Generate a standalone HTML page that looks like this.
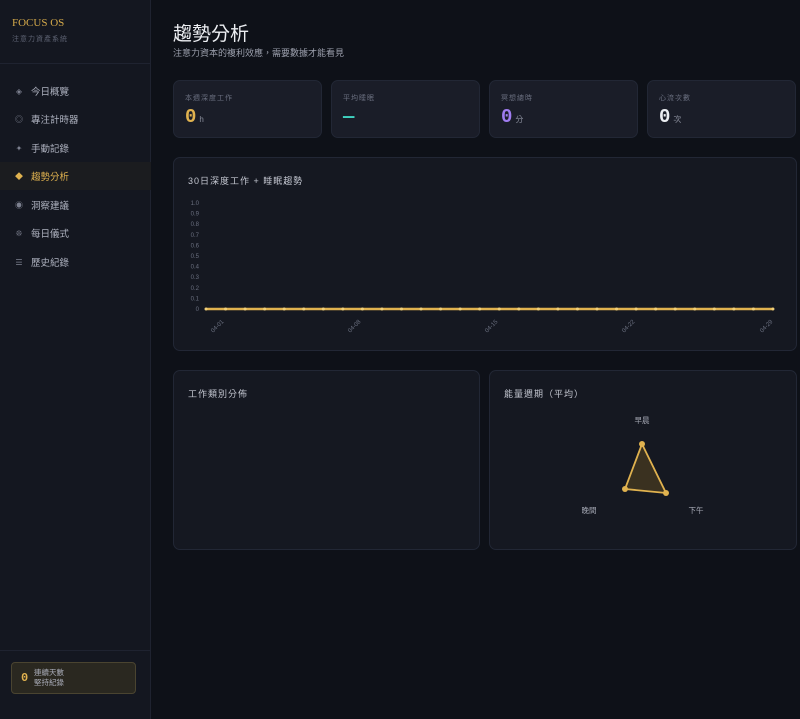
<!DOCTYPE html>
<html><head><meta charset="utf-8"><style>
*{margin:0;padding:0;box-sizing:border-box}
body{width:800px;height:719px;background:#0e1118;font-family:"Liberation Sans","Noto Sans CJK TC",sans-serif;color:#c9ccd6;position:relative;overflow:hidden}
.sb{position:absolute;left:0;top:0;width:151px;height:719px;background:#141720;border-right:1px solid #1f2330}
.logo{position:absolute;left:12px;top:17px;font-family:"Liberation Serif",serif;color:#d4a94a;font-size:11px}
.sub{position:absolute;left:12px;top:34px;font-size:7px;color:#5d6272;letter-spacing:1px}
.hr{position:absolute;left:0;width:151px;height:1px;background:#1f2330}
.nav{position:absolute;left:0;width:151px;height:28px;font-size:9.5px;color:#aeb2bf;display:flex;align-items:center}
.nav i{font-style:normal;width:20px;margin-left:9px;margin-right:2px;text-align:center;font-size:8px;color:#7d8190}
.nav.a{background:#1b1c1f;color:#e0b24f}.nav.a i{color:#e0b24f}
.card{position:absolute;background:#1a1d28;border:1px solid #222735;border-radius:7px}
.lbl{position:absolute;left:11px;top:12px;font-size:7px;color:#6b7080;letter-spacing:1px}
.val{position:absolute;left:11px;top:25px;font-family:"Liberation Mono",monospace;font-weight:bold;font-size:19px}
.val small{font-family:"Liberation Sans","Noto Sans CJK TC",sans-serif;font-weight:normal;font-size:8px;color:#8a8e9c;margin-left:3px}
.ct{position:absolute;left:14px;top:16px;font-size:9px;color:#c3c6d0;letter-spacing:1px}
</style></head><body>
<div class="sb">
<div class="logo">FOCUS OS</div>
<div class="sub">注意力資產系統</div>
<div class="hr" style="top:63px"></div>
<div class="nav" style="top:77px"><i>◈</i>今日概覽</div>
<div class="nav" style="top:105px"><i>◎</i>專注計時器</div>
<div class="nav" style="top:134px"><i>✦</i>手動記錄</div>
<div class="nav a" style="top:162px"><i>◆</i>趨勢分析</div>
<div class="nav" style="top:191px"><i>◉</i>洞察建議</div>
<div class="nav" style="top:219px"><i>❊</i>每日儀式</div>
<div class="nav" style="top:248px"><i>☰</i>歷史紀錄</div>
<div class="hr" style="top:650px"></div>
<div style="position:absolute;left:11px;top:662px;width:125px;height:32px;background:#2a2820;border:1px solid #4a4430;border-radius:4px">
<div style="position:absolute;left:9px;top:8px;font-family:'Liberation Mono',monospace;font-weight:bold;color:#e0b24f;font-size:12px">0</div>
<div style="position:absolute;left:22px;top:5px;font-size:7.5px;color:#a9acb8;line-height:10px">連續天數<br>堅持紀錄</div>
</div>
</div>
<div style="position:absolute;left:173px;top:19px;font-size:19px;color:#eceef2">趨勢分析</div>
<div style="position:absolute;left:173px;top:46px;font-size:9px;color:#9a9eab">注意力資本的複利效應，需要數據才能看見</div>

<div class="card" style="left:173px;top:80px;width:149px;height:58px"><div class="lbl">本週深度工作</div><div class="val" style="color:#e0b24f">0<small>h</small></div></div>
<div class="card" style="left:331px;top:80px;width:149px;height:58px"><div class="lbl">平均睡眠</div><div class="val" style="color:#3fd1bf">—</div></div>
<div class="card" style="left:489px;top:80px;width:149px;height:58px"><div class="lbl">冥想總時</div><div class="val" style="color:#a07cf0">0<small>分</small></div></div>
<div class="card" style="left:647px;top:80px;width:149px;height:58px"><div class="lbl">心流次數</div><div class="val" style="color:#eceef2">0<small>次</small></div></div>

<div class="card" style="left:173px;top:157px;width:624px;height:194px;background:#151821"><div class="ct">30日深度工作 + 睡眠趨勢</div></div>
<svg style="position:absolute;left:0;top:0" width="800" height="719">
<g font-size="6" fill="#6b7080" text-anchor="end" font-family="Liberation Sans">
<text x="199" y="205">1.0</text><text x="199" y="215.6">0.9</text><text x="199" y="226.2">0.8</text><text x="199" y="236.8">0.7</text><text x="199" y="247.4">0.6</text><text x="199" y="258">0.5</text><text x="199" y="268.6">0.4</text><text x="199" y="279.2">0.3</text><text x="199" y="289.8">0.2</text><text x="199" y="300.4">0.1</text><text x="199" y="311">0</text>
</g>
<line x1="206" y1="309" x2="773" y2="309" stroke="#e0b24f" stroke-width="2.5"/>
<g fill="#f0cf7a" id="d"></g>
<g font-size="6" fill="#6b7080" font-family="Liberation Sans" text-anchor="end">
<text transform="translate(224,322) rotate(-45)">04-01</text>
<text transform="translate(361,322) rotate(-45)">04-08</text>
<text transform="translate(498,322) rotate(-45)">04-15</text>
<text transform="translate(635,322) rotate(-45)">04-22</text>
<text transform="translate(773,322) rotate(-45)">04-29</text>
</g>
</svg>
<div class="card" style="left:173px;top:370px;width:307px;height:180px;background:#151821"><div class="ct">工作類別分佈</div></div>
<div class="card" style="left:489px;top:370px;width:308px;height:180px;background:#151821"><div class="ct">能量週期（平均）</div></div>
<svg style="position:absolute;left:0;top:0" width="800" height="719">
<polygon points="642,444 666,493 625,489" fill="#3a3120" stroke="#e0b24f" stroke-width="1.8"/>
<circle cx="642" cy="444" r="3" fill="#e0b24f"/><circle cx="666" cy="493" r="3" fill="#e0b24f"/><circle cx="625" cy="489" r="3" fill="#e0b24f"/>
<g font-size="7.5" fill="#a9acb8" font-family="Liberation Sans,Noto Sans CJK TC" text-anchor="middle">
<text x="642" y="423">早晨</text><text x="589" y="513">晚間</text><text x="696" y="513">下午</text></g>
</svg>
<script>
var g=document.getElementById('d'),s='';for(var i=0;i<30;i++){s+='<circle cx="'+(206+i*19.55)+'" cy="309" r="1.5"/>'}g.innerHTML=s;
</script>
</body></html>
